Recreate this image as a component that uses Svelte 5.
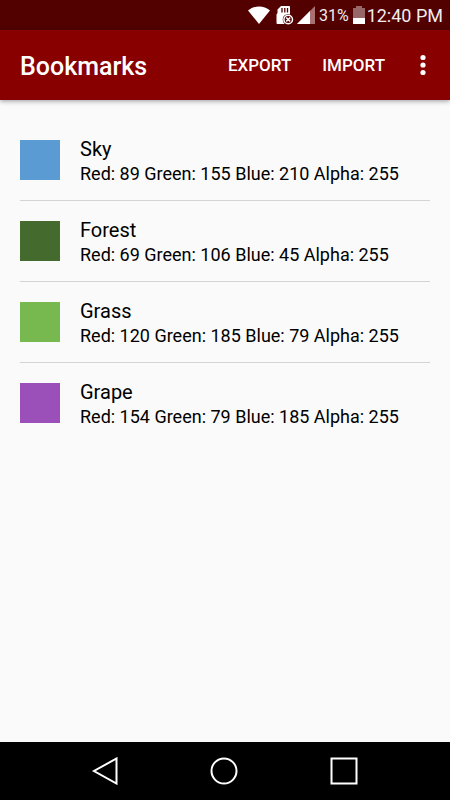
<script lang="ts">
  type Bookmark = { name: string; red: number; green: number; blue: number; alpha: number };

  const battery = 31;
  const time = '12:40 PM';

  let bookmarks: Bookmark[] = [
    { name: 'Sky', red: 89, green: 155, blue: 210, alpha: 255 },
    { name: 'Forest', red: 69, green: 106, blue: 45, alpha: 255 },
    { name: 'Grass', red: 120, green: 185, blue: 79, alpha: 255 },
    { name: 'Grape', red: 154, green: 79, blue: 185, alpha: 255 }
  ];

  function toCss(b: Bookmark) {
    return `rgba(${b.red}, ${b.green}, ${b.blue}, ${b.alpha / 255})`;
  }
</script>

<div class="screen">
  <div class="status-bar">
    <svg width="22" height="18" viewBox="0 0 22 18" aria-hidden="true">
      <path d="M0 4.500C6-.9 16-.9 22 4.500L11 18z" fill="#fff" />
    </svg>
    <svg class="sd-card" width="18" height="20" viewBox="0 0 18 20" aria-hidden="true">
      <path d="M5 1h8Q14 1 14 2V18Q14 19 13 19H1.500Q.5 19 .5 18V9.500L1.500 8V4.500z" fill="#fff" />
      <path d="M6 3v4.500M8.800 3v4.500M11.500 3v4.500" stroke="#520000" stroke-width="1.300" />
      <circle cx="12.200" cy="14.500" r="5.500" fill="#520000" />
      <circle cx="12.200" cy="14.500" r="4.300" fill="none" stroke="#fff" stroke-width="1.500" />
      <path d="M10.200 12.500l4 4M14.200 12.500l-4 4" stroke="#fff" stroke-width="1.600" />
    </svg>
    <svg class="signal" width="18" height="18" viewBox="0 0 18 18" aria-hidden="true">
      <path d="M0 18L18 0v18z" fill="#a87070" />
      <path d="M0 18L13 5v13z" fill="#fff" />
    </svg>
    <span class="battery-level">{battery}%</span>
    <svg class="battery" width="12" height="18" viewBox="0 0 12 18" aria-hidden="true">
      <path d="M0 2h3V0h6v2h3v10H0z" fill="#976666" />
      <path d="M0 12h12v6H0z" fill="#fff" />
    </svg>
    <span class="time">{time}</span>
  </div>

  <header class="app-bar">
    <h1>Bookmarks</h1>
    <button type="button">EXPORT</button>
    <button type="button">IMPORT</button>
    <button type="button" class="more" aria-label="More options">
      <svg width="6" height="22" viewBox="0 0 6 22" fill="#fff">
        <circle cx="3" cy="3.500" r="2.600" />
        <circle cx="3" cy="11" r="2.600" />
        <circle cx="3" cy="18.500" r="2.600" />
      </svg>
    </button>
  </header>

  <main>
    <ul>
      {#each bookmarks as bookmark}
        <li>
          <span class="swatch" style="background-color: {toCss(bookmark)}"></span>
          <div class="info">
            <span class="name">{bookmark.name}</span>
            <span class="channels">
              Red: {bookmark.red} Green: {bookmark.green} Blue: {bookmark.blue} Alpha: {bookmark.alpha}
            </span>
          </div>
        </li>
      {/each}
    </ul>
  </main>

  <nav class="nav-bar">
    <button type="button" aria-label="Back">
      <svg width="28" height="28" viewBox="0 0 28 28">
        <path d="M26.500 1.500v25L4 14z" />
      </svg>
    </button>
    <button type="button" aria-label="Home">
      <svg width="28" height="28" viewBox="0 0 28 28">
        <circle cx="14" cy="14" r="12.500" />
      </svg>
    </button>
    <button type="button" aria-label="Recent apps">
      <svg width="28" height="28" viewBox="0 0 28 28">
        <path d="M1.500 1.500h25v25h-25z" />
      </svg>
    </button>
  </nav>
</div>

<style>
  :global(body) {
    margin: 0;
  }

  .screen {
    display: flex;
    flex-direction: column;
    min-height: 100vh;
    background: #fafafa;
    color: #000;
    font-family: Roboto, sans-serif;
  }

  .status-bar {
    display: flex;
    align-items: center;
    justify-content: flex-end;
    height: 30px;
    padding-right: 7px;
    background: #520000;
    color: #eee;
  }

  .sd-card {
    margin-left: 6px;
  }

  .signal {
    margin: 0 4px 0 3px;
  }

  .battery-level {
    font-size: 16px;
  }

  .battery {
    margin: 0 2px 0 4px;
  }

  .time {
    font-size: 18px;
  }

  .app-bar {
    display: flex;
    align-items: center;
    height: 70px;
    padding: 0 20px;
    background: #880000;
    color: #fff;
    box-shadow: 0 1px 5px rgba(0, 0, 0, 0.4);
  }

  h1 {
    flex: 1;
    margin: 0;
    padding-top: 2px;
    font-size: 25px;
    font-weight: 500;
  }

  button {
    padding: 0;
    border: none;
    background: none;
    color: inherit;
    font-family: inherit;
    cursor: pointer;
  }

  .app-bar button {
    display: flex;
    margin-left: 31px;
    font-size: 17px;
    font-weight: 500;
  }

  .app-bar .more {
    margin-left: 35px;
    padding-right: 4px;
  }

  main {
    flex: 1;
    padding: 20px;
  }

  ul {
    margin: 0;
    padding: 0;
    list-style: none;
  }

  li {
    display: flex;
    align-items: center;
    gap: 20px;
    padding: 20px 0;
  }

  li + li {
    border-top: 1px solid #d4d4d4;
  }

  .swatch {
    flex: none;
    width: 40px;
    height: 40px;
  }

  .info {
    display: flex;
    flex-direction: column;
    justify-content: center;
    box-sizing: border-box;
    height: 40px;
    padding-top: 2px;
  }

  .name {
    font-size: 20px;
    line-height: 26px;
  }

  .channels {
    font-size: 18px;
    line-height: 24px;
  }

  .nav-bar {
    display: flex;
    justify-content: center;
    gap: 92px;
    padding: 15px 2px 15px 0;
    background: #000;
  }

  .nav-bar button {
    display: flex;
  }

  .nav-bar svg {
    fill: none;
    stroke: #fff;
    stroke-width: 2;
  }
</style>
